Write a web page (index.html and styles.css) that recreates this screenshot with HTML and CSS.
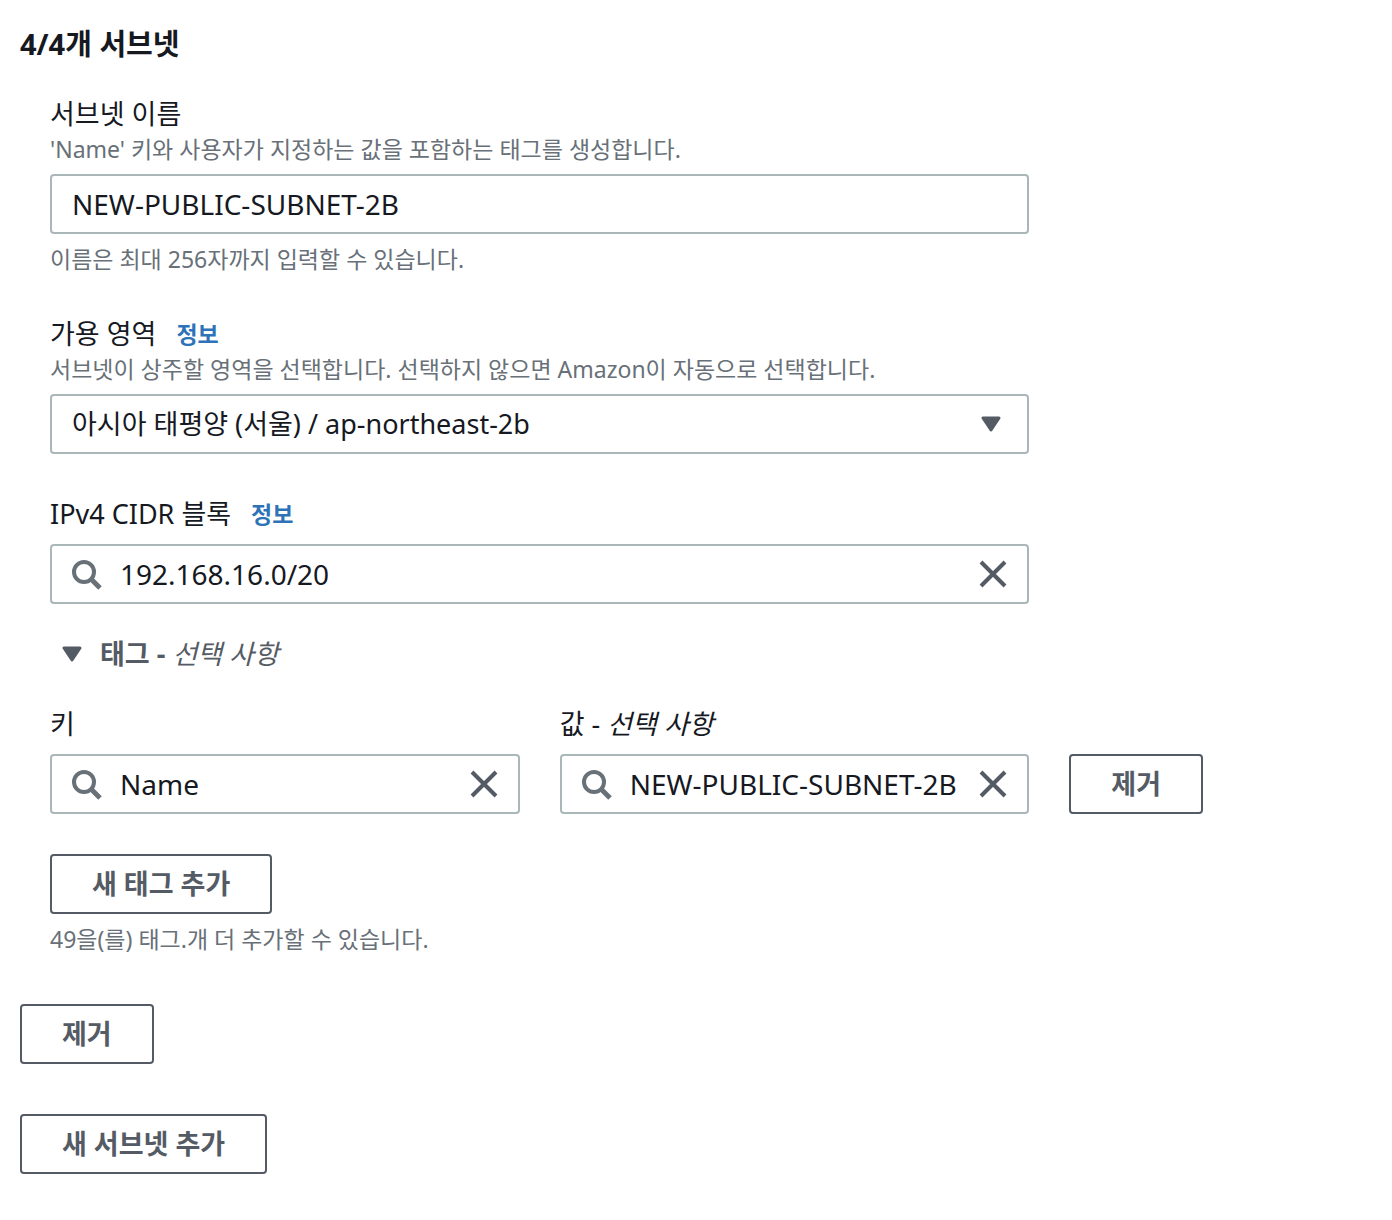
FILE: index.html
```html
<!DOCTYPE html>
<html lang="ko">
<head>
<meta charset="utf-8">
<meta name="viewport" content="width=device-width, initial-scale=1">
<title>서브넷 생성</title>
<link rel="stylesheet" href="styles.css">
</head>
<body>
<svg width="0" height="0" class="sprite" aria-hidden="true">
  <symbol id="search" viewBox="0 0 32 32"><circle cx="14" cy="14" r="10" fill="none" stroke="currentColor" stroke-width="4"/><path d="M21 21l9 9" fill="none" stroke="currentColor" stroke-width="5"/></symbol>
  <symbol id="close" viewBox="0 0 32 32"><path d="M4 4l24 24M28 4L4 28" fill="none" stroke="currentColor" stroke-width="4"/></symbol>
  <symbol id="caret" viewBox="0 0 20 16"><path d="M2 2h16l-8 12z" fill="currentColor" stroke="currentColor" stroke-width="3" stroke-linejoin="round"/></symbol>
</svg>
<main class="page">
  <h2 class="title">4/4개 서브넷</h2>
  <form class="subnet">
    <div class="field">
      <label class="label" for="subnet-name">서브넷 이름</label>
      <p class="description">'Name' 키와 사용자가 지정하는 값을 포함하는 태그를 생성합니다.</p>
      <div class="control"><input class="input" id="subnet-name" type="text" value="NEW-PUBLIC-SUBNET-2B"></div>
      <p class="hint">이름은 최대 256자까지 입력할 수 있습니다.</p>
    </div>
    <div class="field">
      <div class="label-row"><label class="label" for="zone">가용 영역</label><a class="info" href="#zone">정보</a></div>
      <p class="description">서브넷이 상주할 영역을 선택합니다. 선택하지 않으면 Amazon이 자동으로 선택합니다.</p>
      <div class="control">
        <select class="select" id="zone"><option>아시아 태평양 (서울) / ap-northeast-2b</option></select>
        <svg class="caret select-caret" aria-hidden="true"><use href="#caret"/></svg>
      </div>
    </div>
    <div class="field">
      <div class="label-row"><label class="label" for="cidr">IPv4 CIDR 블록</label><a class="info" href="#cidr">정보</a></div>
      <div class="control search">
        <svg class="icon search-icon" aria-hidden="true"><use href="#search"/></svg>
        <input class="input" id="cidr" type="text" value="192.168.16.0/20">
        <button class="clear" type="button" aria-label="지우기"><svg class="icon"><use href="#close"/></svg></button>
      </div>
    </div>
    <button class="toggle" type="button" aria-expanded="true">
      <svg class="caret" aria-hidden="true"><use href="#caret"/></svg>
      <span>태그 - <i class="optional">선택 사항</i></span>
    </button>
    <div class="tags">
      <div>
        <label class="label" for="tag-key">키</label>
        <div class="control search">
          <svg class="icon search-icon" aria-hidden="true"><use href="#search"/></svg>
          <input class="input" id="tag-key" type="text" value="Name">
          <button class="clear" type="button" aria-label="지우기"><svg class="icon"><use href="#close"/></svg></button>
        </div>
      </div>
      <div>
        <label class="label" for="tag-value">값 - <i class="optional">선택 사항</i></label>
        <div class="control search">
          <svg class="icon search-icon" aria-hidden="true"><use href="#search"/></svg>
          <input class="input" id="tag-value" type="text" value="NEW-PUBLIC-SUBNET-2B">
          <button class="clear" type="button" aria-label="지우기"><svg class="icon"><use href="#close"/></svg></button>
        </div>
      </div>
      <button class="button" type="button">제거</button>
    </div>
    <button class="button" type="button">새 태그 추가</button>
    <p class="hint">49을(를) 태그.개 더 추가할 수 있습니다.</p>
  </form>
  <div class="actions">
    <button class="button" type="button">제거</button>
    <button class="button" type="button">새 서브넷 추가</button>
  </div>
</main>
</body>
</html>
```
FILE: styles.css
```css
* { box-sizing: border-box; }

body {
  margin: 0;
  background: #fff;
  color: #16191f;
  font: 27px/40px "Noto Sans", "Noto Sans CJK KR", sans-serif;
}

.sprite { position: absolute; }

.page { padding: 24px 20px 46px; }

.title {
  margin: 0 0 30px;
  font-size: 29px;
  line-height: 40px;
  font-weight: 700;
}

.subnet { padding-left: 30px; }

.field {
  max-width: 979px;
  margin-bottom: 40px;
}

.label {
  display: block;
  line-height: 40px;
}

.label-row {
  display: flex;
  gap: 20px;
}

.info {
  color: #2e73b8;
  font-size: 23px;
  font-weight: 700;
  text-decoration: none;
}

.description,
.hint {
  margin: 0;
  color: #687078;
  font-size: 23px;
  line-height: 30px;
}

.hint { margin-top: 10px; }

.control {
  position: relative;
  display: flex;
  align-items: center;
  height: 60px;
  margin-top: 10px;
  border: 2px solid #aab7b8;
  border-radius: 4px;
  background: #fff;
}

.input,
.select {
  flex: 1;
  min-width: 0;
  height: 100%;
  padding: 0 20px;
  border: 0;
  outline: 0;
  background: none;
  color: inherit;
  font: inherit;
}

.input { font-size: 28px; }

.select { appearance: none; }

.search { padding: 0 18px; }

.search .input { padding: 0 0 0 18px; }

.icon {
  display: block;
  flex: none;
  width: 32px;
  height: 32px;
}

.search-icon { color: #687078; }

.clear {
  padding: 0;
  border: 0;
  background: none;
  color: #545b64;
}

.caret {
  flex: none;
  width: 20px;
  height: 16px;
  color: #545b64;
}

.select-caret {
  position: absolute;
  right: 26px;
  pointer-events: none;
}

.toggle {
  display: flex;
  align-items: center;
  gap: 18px;
  margin: -10px 0 30px;
  padding: 0 12px;
  border: 0;
  background: none;
  color: #545b64;
  font: inherit;
  font-weight: 700;
}

.optional { font-weight: 400; }

.tags {
  display: grid;
  grid-template-columns: minmax(0, 1fr) minmax(0, 1fr) auto;
  align-items: end;
  gap: 40px;
  max-width: 1153px;
  margin-bottom: 40px;
}

.button {
  display: block;
  height: 60px;
  padding: 0 40px;
  border: 2px solid #545b64;
  border-radius: 4px;
  background: #fff;
  color: #545b64;
  font: inherit;
  font-weight: 700;
  white-space: nowrap;
}

.actions {
  display: grid;
  justify-items: start;
  gap: 50px;
  margin-top: 50px;
}
```
